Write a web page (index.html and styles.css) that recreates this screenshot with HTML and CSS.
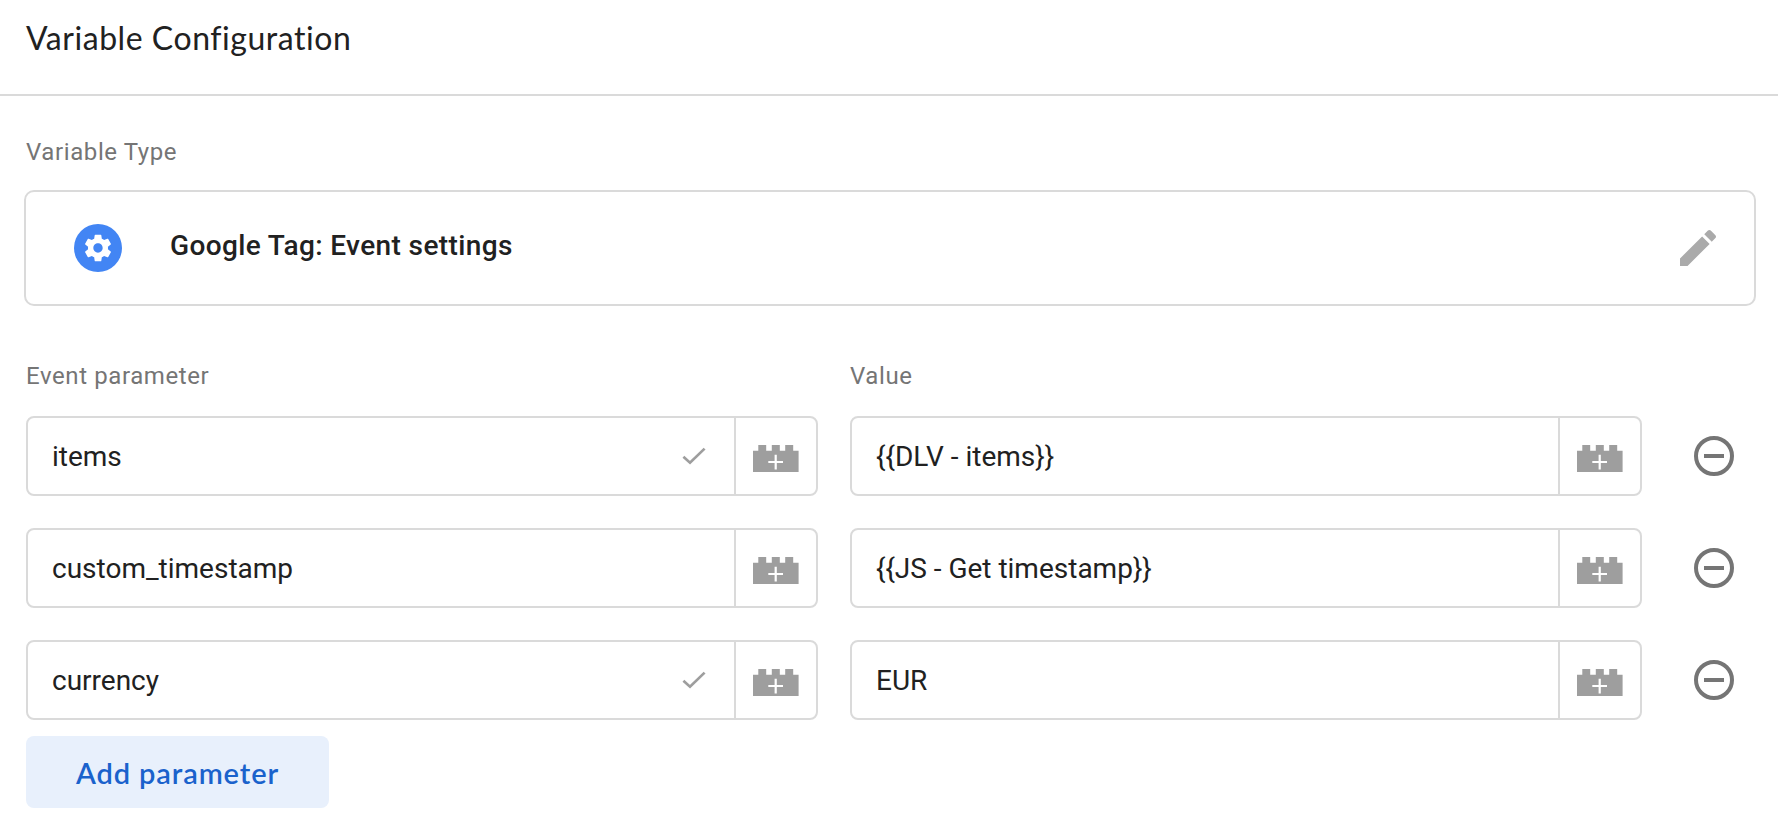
FILE: index.html
```html
<!DOCTYPE html>
<html lang="en">
<head>
<meta charset="utf-8">
<title>Variable Configuration</title>
<link rel="stylesheet" href="styles.css">
</head>
<body>
<svg width="0" height="0" class="sprite" aria-hidden="true">
  <symbol id="brick" viewBox="0 0 46 27"><path fill="#9e9e9e" d="M0 5.7H5.3V0H13.2V5.7H18.8V0H26.8V5.7H32.2V0H40.2V5.7H45.6V27H0z"/><path stroke="#fff" stroke-width="2.2" d="M15.3 17H30M22.7 9.8V24.4"/></symbol>
  <symbol id="check" viewBox="0 0 24 18"><path fill="none" stroke="#9e9e9e" stroke-width="2.7" d="M1.4 9.8L8 15.7L22.6 1.6"/></symbol>
  <symbol id="remove" viewBox="0 0 40 40"><circle cx="20" cy="20" r="18" fill="none" stroke="#757575" stroke-width="4"/><path fill="#757575" d="M10 18h20v4H10z"/></symbol>
</svg>
<header class="header"><h1 class="title">Variable Configuration</h1></header>
<main class="content">
  <div class="label">Variable Type</div>
  <section class="type-card">
    <span class="type-icon"><svg width="32" height="32" viewBox="0 0 24 24"><path fill="#fff" d="M19.43 12.98c.04-.32.07-.64.07-.98s-.03-.66-.07-.98l2.11-1.65c.19-.15.24-.42.12-.64l-2-3.46c-.12-.22-.39-.3-.61-.22l-2.49 1c-.52-.4-1.08-.73-1.69-.98l-.38-2.65C14.46 2.18 14.25 2 14 2h-4c-.25 0-.46.18-.49.42l-.38 2.65c-.61.25-1.17.59-1.69.98l-2.49-1c-.23-.09-.49 0-.61.22l-2 3.46c-.13.22-.07.49.12.64l2.11 1.65c-.04.32-.07.65-.07.98s.03.66.07.98l-2.11 1.65c-.19.15-.24.42-.12.64l2 3.46c.12.22.39.3.61.22l2.49-1c.52.4 1.08.73 1.69.98l.38 2.65c.03.24.24.42.49.42h4c.25 0 .46-.18.49-.42l.38-2.65c.61-.25 1.17-.59 1.69-.98l2.49 1c.23.09.49 0 .61-.22l2-3.46c.12-.22.07-.49-.12-.64l-2.11-1.65zM12 15.5c-1.93 0-3.5-1.57-3.5-3.5s1.57-3.5 3.5-3.5 3.5 1.57 3.5 3.5-1.57 3.5-3.5 3.5z"/></svg></span>
    <span class="type-name">Google Tag: Event settings</span>
    <svg class="edit" width="48" height="48" viewBox="0 0 24 24"><path fill="#aaa" d="M3 17.25V21h3.75L17.81 9.94l-3.75-3.75L3 17.25zM20.71 7.04c.39-.39.39-1.02 0-1.41l-2.34-2.34c-.39-.39-1.02-.39-1.41 0l-1.83 1.83 3.75 3.75 1.83-1.83z"/></svg>
  </section>
  <div class="columns"><div class="label">Event parameter</div><div class="label">Value</div></div>
  <div class="rows">
    <div class="row">
      <div class="field"><span class="text">items</span><svg class="check"><use href="#check"/></svg><span class="picker"><svg class="brick"><use href="#brick"/></svg></span></div>
      <div class="field"><span class="text">{{DLV - items}}</span><span class="picker"><svg class="brick"><use href="#brick"/></svg></span></div>
      <svg class="remove"><use href="#remove"/></svg>
    </div>
    <div class="row">
      <div class="field"><span class="text">custom_timestamp</span><span class="picker"><svg class="brick"><use href="#brick"/></svg></span></div>
      <div class="field"><span class="text">{{JS - Get timestamp}}</span><span class="picker"><svg class="brick"><use href="#brick"/></svg></span></div>
      <svg class="remove"><use href="#remove"/></svg>
    </div>
    <div class="row">
      <div class="field"><span class="text">currency</span><svg class="check"><use href="#check"/></svg><span class="picker"><svg class="brick"><use href="#brick"/></svg></span></div>
      <div class="field"><span class="text">EUR</span><span class="picker"><svg class="brick"><use href="#brick"/></svg></span></div>
      <svg class="remove"><use href="#remove"/></svg>
    </div>
  </div>
  <button class="add">Add parameter</button>
</main>
</body>
</html>
```
FILE: styles.css
```css
* { box-sizing: border-box; }
body {
  margin: 0;
  background: #fff;
  color: #212121;
  font-family: Roboto, "Liberation Sans", sans-serif;
}
svg { display: block; flex: none; }
.sprite { display: none; }
.header {
  height: 96px;
  padding: 18px 26px 0;
  border-bottom: 2px solid #dadada;
}
.title {
  margin: 0;
  font: 400 32px/40px Lato, sans-serif;
  letter-spacing: 0.54px;
}
.content { padding: 40px 22px 0 26px; }
.label {
  height: 32px;
  font-size: 24px;
  line-height: 32px;
  letter-spacing: 0.6px;
  color: #757575;
}
.type-card {
  display: flex;
  align-items: center;
  height: 116px;
  margin: 22px 0 0 -2px;
  padding: 0 32px 0 48px;
  border: 2px solid #dadada;
  border-radius: 10px;
}
.type-icon {
  display: flex;
  align-items: center;
  justify-content: center;
  width: 48px;
  height: 48px;
  border-radius: 50%;
  background: #4285f4;
}
.type-name {
  margin: 0 0 4px 48px;
  font-size: 28px;
  font-weight: 500;
  line-height: 36px;
  letter-spacing: 0.38px;
}
.edit { margin-left: auto; }
.columns {
  display: grid;
  grid-template-columns: 792px 792px;
  gap: 32px;
  margin-top: 54px;
}
.rows {
  display: grid;
  gap: 32px;
  margin-top: 24px;
}
.row {
  display: grid;
  grid-template-columns: 792px 792px 40px;
  column-gap: 32px;
  align-items: center;
}
.field {
  display: flex;
  align-items: center;
  height: 80px;
  border: 2px solid #dadada;
  border-radius: 8px;
}
.text {
  flex: 1;
  padding: 2px 0 0 24px;
  font-size: 28px;
  line-height: 36px;
}
.check {
  width: 24px;
  height: 18px;
  margin-right: 28px;
}
.picker {
  display: flex;
  align-items: center;
  width: 82px;
  height: 100%;
  padding: 4px 0 0 17px;
  border-left: 2px solid #dadada;
}
.brick { width: 46px; height: 27px; }
.remove { width: 40px; height: 40px; margin-left: 20px; }
.add {
  display: block;
  width: 303px;
  height: 72px;
  margin-top: 16px;
  padding: 1px 0 0;
  border: 0;
  border-radius: 8px;
  background: #e8f0fc;
  color: #1a62cc;
  font: 600 29px/36px Lato, sans-serif;
  letter-spacing: 0.9px;
}
```
